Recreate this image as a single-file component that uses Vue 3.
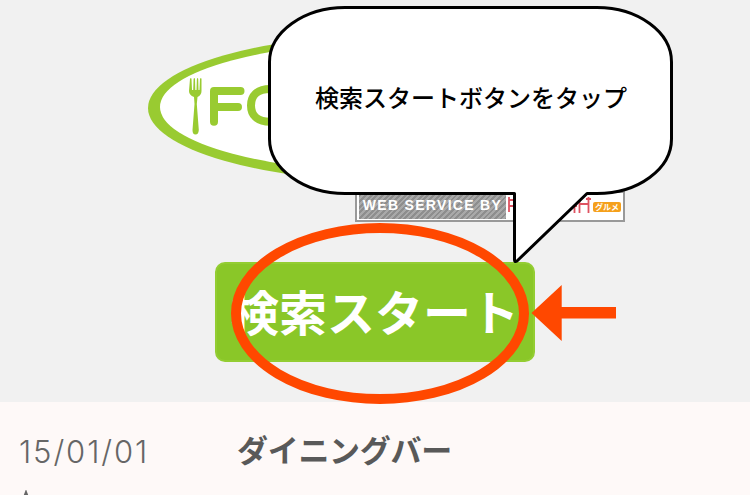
<script setup>
const entry = { date: '15/01/01', title: 'ダイニングバー' }
</script>

<template>
  <main class="screen">
    <section class="hero">
      <svg class="logo" width="520" height="146" viewBox="0 0 520 146">
        <ellipse class="plate-edge" cx="260" cy="73" rx="260" ry="74.500" />
        <ellipse class="plate" cx="260" cy="72" rx="248" ry="66" />
        <path
          class="fork"
          d="M42 44 Q43 42 43.500 44 L44 55 H45.200 L45.600 44 Q46.300 42 47 44 L47.300 55 H48.500 L48.900 44 Q49.500 42 50.200 44 L50.500 55 H51.500 L52 44 Q53 42 53.500 44 V56 Q53.500 60 49.500 62 L48.800 69 L50.800 95 Q50.500 99.500 47.500 99.500 Q44.500 99.500 44.500 95 L46.500 69 L46 62 Q41 60 41 56 Z"
        />
        <path class="letters" d="M92.500 56 H66 V86.700 M66 72 H90 M131 54 H122 C109 54 103 61 103 70.400 C103 80 109 86.700 122 86.700 H131" />
      </svg>

      <div class="credit">
        <span class="credit-label">WEB SERVICE BY</span>
        <svg class="credit-mark" width="86" height="22" viewBox="0 0 86 22">
          <path d="M2 1 V16 M2 4 H7 M2 10 H7 M67.500 6 V17 M65 10 H70 M72.500 1 V17 M81.500 1 V17 M72.500 8 H81.500 M70 3 H75 M79 3 H84" />
        </svg>
        <span class="credit-tag">グルメ</span>
      </div>

      <button class="start" type="button"><span>検索スタート</span></button>
    </section>

    <section class="entry">
      <time class="date">{{ entry.date }}</time>
      <h2 class="title">{{ entry.title }}</h2>
      <svg class="star" width="28" height="26" viewBox="0 0 28 26">
        <path d="M14 2 L17 10 L26 10 L19 16 L22 24 L14 19 L6 24 L9 16 L2 10 L11 10 Z" />
      </svg>
    </section>

    <svg class="marks" width="750" height="495" viewBox="0 0 750 495">
      <ellipse class="ring" cx="380" cy="313.500" rx="144" ry="85.500" />
      <path class="arrow" d="M531.500 313 L561.700 285 V307 H616 V318.500 H561.700 V341 Z" />
      <path
        class="bubble"
        d="M345 7.500 H597 C638 7.500 671.500 32 671.500 62 V139 C671.500 169 638 193.500 597 193.500 H587 L517 261 Q514.500 262.500 514.500 260 V193.500 H345 C304 193.500 269.500 169 269.500 139 V62 C269.500 32 304 7.500 345 7.500 Z"
      />
    </svg>
    <p class="tip">検索スタートボタンをタップ</p>
  </main>
</template>

<style>
body {
  margin: 0;
  overflow: hidden;
}
</style>

<style scoped>
.screen {
  position: relative;
  width: 750px;
  height: 495px;
  overflow: hidden;
  background: #fef9f8;
  font-family: "Noto Sans CJK JP", sans-serif;
}
.hero {
  box-sizing: border-box;
  height: 402px;
  padding-top: 35px;
  display: flex;
  flex-direction: column;
  align-items: center;
  background: #f1f1f1;
}
.logo {
  flex: none;
  margin-left: 66px;
  overflow: visible;
}
.plate-edge {
  fill: #99cb31;
}
.plate {
  fill: #fff;
}
.fork {
  fill: #99cb31;
}
.letters {
  fill: none;
  stroke: #99cb31;
  stroke-width: 8;
  stroke-linecap: round;
  stroke-linejoin: round;
}
.credit {
  box-sizing: border-box;
  flex: none;
  display: flex;
  align-items: center;
  width: 270px;
  height: 31px;
  margin: 10px 0 40px 230px;
  padding: 2px;
  border: 2px solid #999;
  background: #fff;
}
.credit-label {
  width: 147px;
  height: 24px;
  flex: none;
  background: repeating-linear-gradient(135deg, #8e8e8e 0 2px, #a9a9a9 2px 4px);
  color: #fff;
  font: bold 14px/20px "Liberation Sans", sans-serif;
  letter-spacing: 1.3px;
  text-align: center;
  white-space: nowrap;
}
.credit-mark {
  flex: none;
  margin-left: 1px;
  fill: none;
  stroke: #df5361;
  stroke-width: 1.8;
}
.credit-tag {
  flex: none;
  width: 28px;
  height: 10px;
  margin: 1px 0 0;
  border-radius: 2px;
  background: #f5a01b;
  color: #fff;
  font-size: 8px;
  font-weight: 700;
  line-height: 9px;
  text-align: center;
}
.start {
  box-sizing: border-box;
  flex: none;
  width: 320px;
  height: 100px;
  padding: 0;
  border: 2px solid #93cd32;
  border-radius: 10px;
  background: #8ac728;
  color: #fff;
  font-family: inherit;
  font-size: 48px;
  font-weight: 700;
  white-space: nowrap;
}
.start span {
  display: block;
  line-height: 92px;
  padding-bottom: 4px;
}
.entry {
  height: 93px;
  display: grid;
  grid-template-columns: 218px 1fr;
  grid-template-rows: 88px 26px;
  padding-left: 19px;
  color: #666;
}
.date {
  font: 300 31px/36px Inter, sans-serif;
  letter-spacing: 1.9px;
  padding-top: 32px;
}
.title {
  margin: 0;
  padding-top: 25px;
  font-size: 31px;
  font-weight: 700;
  line-height: 44px;
  letter-spacing: -0.3px;
  color: #595959;
}
.star {
  margin-left: -7px;
  fill: none;
  stroke: #666;
  stroke-width: 2;
}
.marks {
  position: absolute;
  inset: 0;
}
.ring {
  fill: none;
  stroke: #ff4800;
  stroke-width: 10;
}
.arrow {
  fill: #ff4800;
}
.bubble {
  fill: #fff;
  stroke: #000;
  stroke-width: 3;
  stroke-linejoin: round;
}
.tip {
  position: absolute;
  left: 315px;
  top: 79px;
  margin: 0;
  font-size: 24px;
  font-weight: 500;
  line-height: 36px;
  white-space: nowrap;
  color: #000;
}
</style>
